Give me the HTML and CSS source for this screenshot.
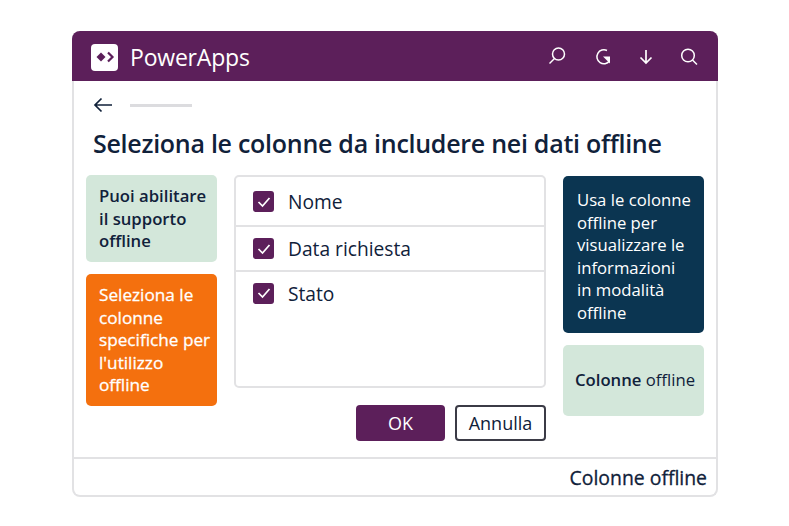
FILE: index.html
```html
<!DOCTYPE html>
<html lang="it">
<head>
    <meta charset="UTF-8">
    <meta name="viewport" content="width=device-width, initial-scale=1.0">
    <title>PowerApps</title>
    <link rel="stylesheet" href="styles.css">
</head>
<body>
    <div class="window">
        <header class="top-bar">
            <div class="brand">
                <span class="logo">
                    <svg width="18" height="12" viewBox="0 0 18 12"><path d="M5 1.500 9.500 6 5 10.500 .5 6Z" fill="#5c1f5a"/><path d="M12 1.500 16.500 6 12 10.500" fill="none" stroke="#5c1f5a" stroke-width="2.200"/></svg>
                </span>
                <span class="brand-name">PowerApps</span>
            </div>
            <div class="top-icons">
                <svg width="20" height="20" viewBox="0 0 20 20" fill="none" stroke="#fff" stroke-width="1.500"><circle cx="8.500" cy="7" r="6"/><path d="M4.500 11.500 -.5 16.500"/></svg>
                <svg width="20" height="20" viewBox="0 0 20 20" fill="none" stroke="#fff" stroke-width="1.500"><path d="M14 3.500A7 7 0 1 0 16.500 14"/><path d="M10 9.500h7v7Z" fill="#fff" stroke="none"/></svg>
                <svg width="20" height="20" viewBox="0 0 20 20" fill="none" stroke="#fff" stroke-width="1.700"><path d="M10 3v13M4.500 10.500 10 16l5.500-5.500"/></svg>
                <svg width="20" height="20" viewBox="0 0 20 20" fill="none" stroke="#fff" stroke-width="1.500"><circle cx="9" cy="8.500" r="6.300"/><path d="M13.500 13 18 17.500"/></svg>
            </div>
        </header>

        <div class="nav-row">
            <svg width="20" height="16" viewBox="0 0 20 16" fill="none" stroke="#10213a" stroke-width="1.700"><path d="M19 8H2M8.500 1.500 2 8l6.500 6.500"/></svg>
            <span class="nav-line"></span>
        </div>

        <h1>Seleziona le colonne da includere nei dati offline</h1>

        <div class="content">
            <div class="side side-left">
                <div class="note note-green note-strong">Puoi abilitare il supporto offline</div>
                <div class="note note-orange">Seleziona le colonne specifiche per l'utilizzo offline</div>
            </div>

            <div class="middle">
                <div class="column-list">
                    <label class="column-row row-first"><span class="check"><svg width="14" height="12" viewBox="0 0 14 12" fill="none" stroke="#fff" stroke-width="1.700"><path d="M1.500 6 5.500 10 12.500 2"/></svg></span>Nome</label>
                    <label class="column-row row-second"><span class="check"><svg width="14" height="12" viewBox="0 0 14 12" fill="none" stroke="#fff" stroke-width="1.700"><path d="M1.500 6 5.500 10 12.500 2"/></svg></span>Data richiesta</label>
                    <label class="column-row row-third"><span class="check"><svg width="14" height="12" viewBox="0 0 14 12" fill="none" stroke="#fff" stroke-width="1.700"><path d="M1.500 6 5.500 10 12.500 2"/></svg></span>Stato</label>
                </div>
                <div class="buttons">
                    <button class="btn-ok">OK</button>
                    <button class="btn-cancel">Annulla</button>
                </div>
            </div>

            <div class="side side-right">
                <div class="note note-navy">Usa le colonne offline per visualizzare le informazioni<br>in modalità offline</div>
                <div class="note note-green note-center"><span><b>Colonne</b> offline</span></div>
            </div>
        </div>

        <footer class="bottom-bar">Colonne offline</footer>
    </div>
</body>
</html>
```

FILE: styles.css
```css
* {
    box-sizing: border-box;
}

body {
    margin: 0;
    background-color: #fff;
    font-family: 'Open Sans', 'Noto Sans', sans-serif;
    color: #10213a;
}

.window {
    width: 646px;
    height: 466px;
    margin: 31px 0 0 72px;
    border: 2px solid #e2e2e4;
    border-top: none;
    border-radius: 8px;
    display: flex;
    flex-direction: column;
}

.top-bar {
    height: 50px;
    margin: 0 -2px;
    background-color: #5c1f5a;
    border-radius: 8px 8px 0 0;
    display: flex;
    justify-content: space-between;
    align-items: center;
    padding: 2px 19px 0 19px;
}

.top-bar svg {
    overflow: visible;
}

.brand {
    display: flex;
    align-items: center;
    gap: 12px;
}

.logo {
    width: 27px;
    height: 27px;
    background-color: #fff;
    border-radius: 4px;
    display: flex;
    justify-content: center;
    align-items: center;
}

.brand-name {
    color: #fff;
    font-size: 23px;
    letter-spacing: -0.2px;
}

.top-icons {
    display: flex;
    gap: 23px;
}

.nav-row {
    height: 24px;
    margin-top: 12px;
    padding-left: 19px;
    display: flex;
    align-items: center;
    gap: 17px;
}

.nav-line {
    width: 62px;
    height: 3px;
    background-color: #dcdcdf;
}

h1 {
    margin: 9px 0 0 19px;
    font-size: 25px;
    line-height: 34px;
    font-weight: 600;
    letter-spacing: -0.27px;
    white-space: nowrap;
}

.content {
    flex: 1;
    padding: 15px 12px 0;
    display: flex;
    gap: 17px;
}

.side {
    display: flex;
    flex-direction: column;
    gap: 12px;
}

.side-left {
    width: 131px;
}

.side-right {
    width: 141px;
    padding-top: 1px;
}

.note {
    border-radius: 5px;
    font-size: 16.700px;
    line-height: 22.500px;
    padding: 10px 4px 10px 13px;
}

.note-green {
    background-color: #d3e7da;
}

.note-strong {
    height: 87px;
    font-weight: 600;
}

.note-orange {
    height: 132px;
    background-color: #f4700e;
    color: #fff;
    font-size: 17.200px;
    -webkit-text-stroke: 0.3px #fff;
}

.note-navy {
    height: 157px;
    background-color: #0b3551;
    color: #fff;
    padding: 13px 6px 10px 14px;
}

.note-center {
    height: 71px;
    display: flex;
    align-items: center;
    padding: 0 0 0 12px;
    white-space: nowrap;
}

.note-center b {
    font-weight: 600;
}

.middle {
    width: 312px;
}

.column-list {
    height: 213px;
    border: 2px solid #e2e2e4;
    border-radius: 5px;
}

.column-row {
    display: flex;
    align-items: center;
    gap: 14px;
    padding-left: 17px;
    font-size: 19.200px;
    border-bottom: 2px solid #e2e2e4;
}

.row-first {
    height: 50px;
    padding-top: 1px;
}

.row-second {
    height: 45px;
}

.row-third {
    height: 43px;
    padding-bottom: 1px;
    border-bottom: none;
}

.check {
    width: 21px;
    height: 21px;
    background-color: #5c1f5a;
    border-radius: 3px;
    display: flex;
    justify-content: center;
    align-items: center;
}

.buttons {
    margin-top: 17px;
    display: flex;
    justify-content: flex-end;
    gap: 10px;
}

.buttons button {
    height: 36px;
    border-radius: 4px;
    font-family: inherit;
    font-size: 18px;
    padding: 0;
}

.btn-ok {
    width: 89px;
    background-color: #5c1f5a;
    border: none;
    color: #fff;
}

.btn-cancel {
    width: 91px;
    background-color: #fff;
    border: 2px solid #3b3b46;
    color: #10213a;
}

.bottom-bar {
    height: 38px;
    border-top: 2px solid #e2e2e4;
    padding-right: 9px;
    text-align: right;
    font-size: 19.400px;
    -webkit-text-stroke: 0.3px #10213a;
    line-height: 38px;
}
```
